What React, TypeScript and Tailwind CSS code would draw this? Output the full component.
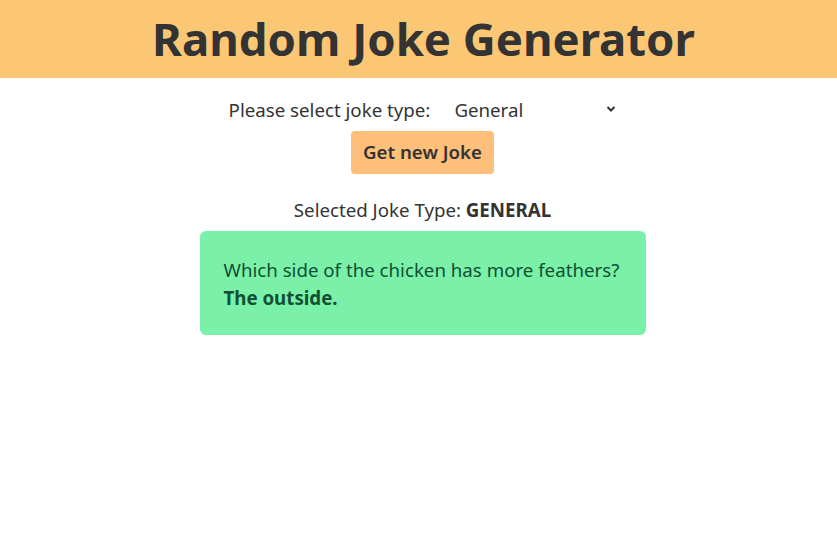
import React from "react";

export default function App() {
  return (
    <div className="min-h-screen bg-white text-[#333333]" style={{ fontFamily: '"Noto Sans", "Open Sans", sans-serif' }}>
      <header className="h-[78px] bg-[#fbc775] flex items-center justify-center pl-[10px]">
        <h1 className="text-[45.5px] font-bold leading-none text-[#333333]">Random Joke Generator</h1>
      </header>
      <div className="flex flex-col items-center pl-[8px]">
        <div className="mt-[18px] flex items-center h-[28px] text-[18.7px]">
          <label className="mr-[24px]">Please select joke type:</label>
          <div className="relative w-[162px] flex items-center">
            <span>General</span>
            <svg className="absolute right-[0px] top-[9px]" width="10" height="8" viewBox="0 0 10 8">
              <path d="M1.5 2 L5 5.5 L8.5 2" fill="none" stroke="#333" strokeWidth="2" />
            </svg>
          </div>
        </div>
        <button className="mt-[7px] h-[43px] w-[143px] rounded-[4px] bg-[#fdbf79] text-[18.7px] font-semibold text-[#333333]">
          Get new Joke
        </button>
        <div className="mt-[23px] text-[18.7px] h-[26px] leading-[26px]">
          Selected Joke Type: <span className="font-bold">GENERAL</span>
        </div>
        <div className="mt-[8px] w-[446px] h-[104px] rounded-[6px] bg-[#7af0a8] px-[24px] pt-[25px] text-[18.7px] leading-[28px] text-[#0f5132]">
          <div>Which side of the chicken has more feathers?</div>
          <div className="font-bold">The outside.</div>
        </div>
      </div>
    </div>
  );
}
